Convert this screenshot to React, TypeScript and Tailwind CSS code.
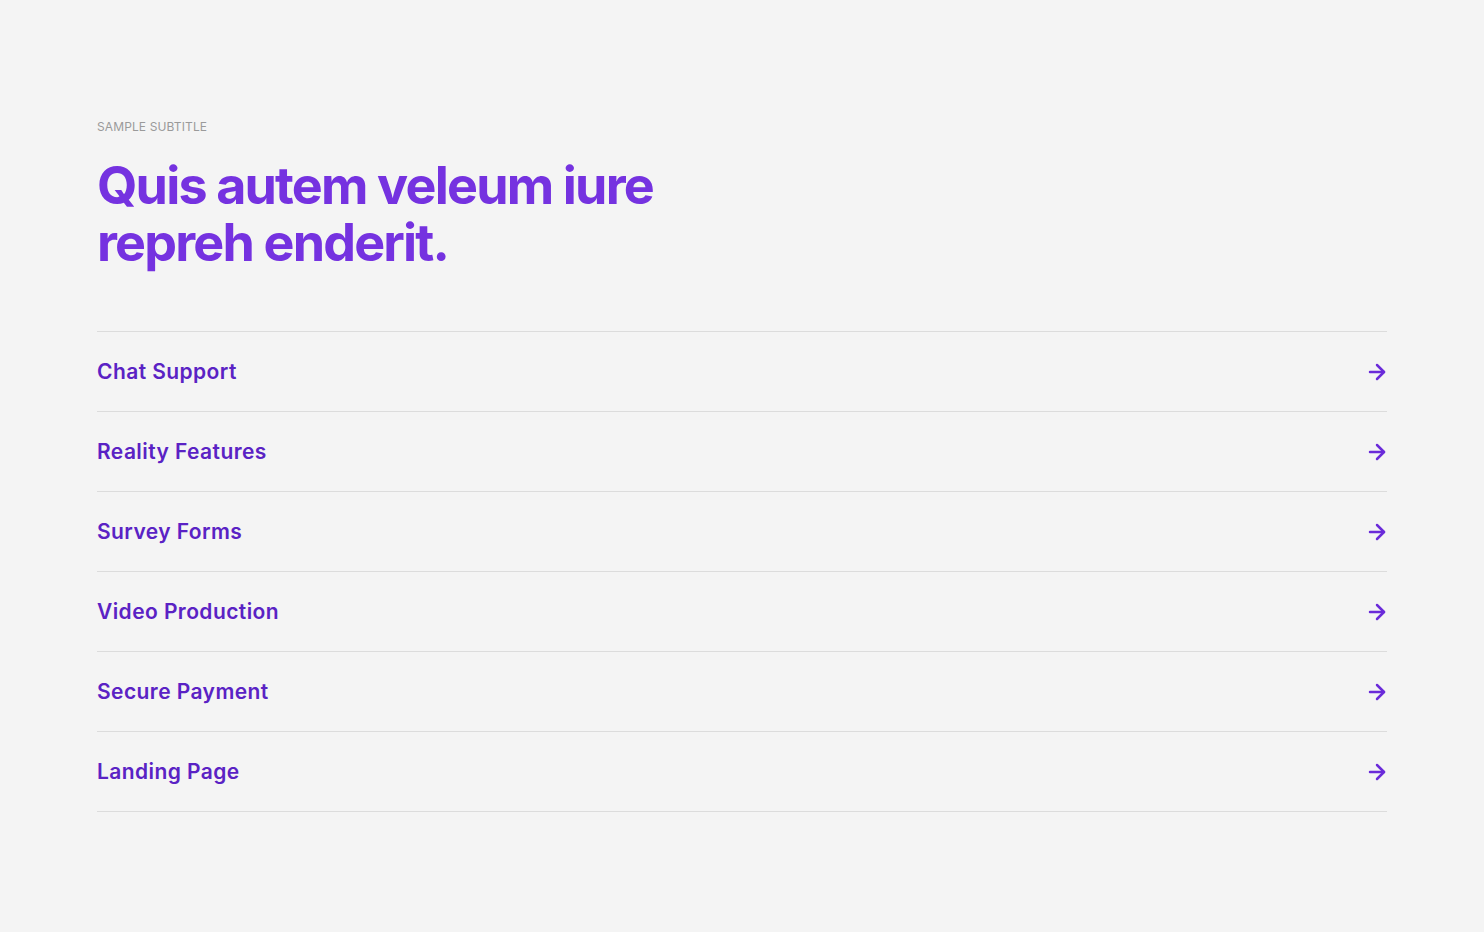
import { ArrowRight } from "lucide-react"

const items = ["Chat Support", "Reality Features", "Survey Forms", "Video Production", "Secure Payment", "Landing Page"]

export default function App() {
  return (
    <div className="min-h-screen bg-[#f4f4f4] font-['Inter',sans-serif]">
      <div className="px-[97px] pt-[120px]">
        <p className="text-[12px] leading-[14px] uppercase tracking-[0.01em] text-[#9a9a9a]">Sample Subtitle</p>
        <h2 className="mt-[23px] text-[52px] leading-[57px] font-bold tracking-[-0.035em] text-[#7532e0]">
          Quis autem veleum iure
          <br />
          repreh enderit.
        </h2>
        <ul className="mt-[60px] border-t border-[#dcdcdc]">
          {items.map((item) => (
            <li key={item} className="flex h-[80px] items-center justify-between border-b border-[#dcdcdc]">
              <span className="text-[21px] font-semibold tracking-[0.02em] text-[#5a22c4]">{item}</span>
              <ArrowRight className="mr-[-2px] h-[24px] w-[24px] text-[#6a2bd9]" strokeWidth={2.5} />
            </li>
          ))}
        </ul>
      </div>
    </div>
  )
}
